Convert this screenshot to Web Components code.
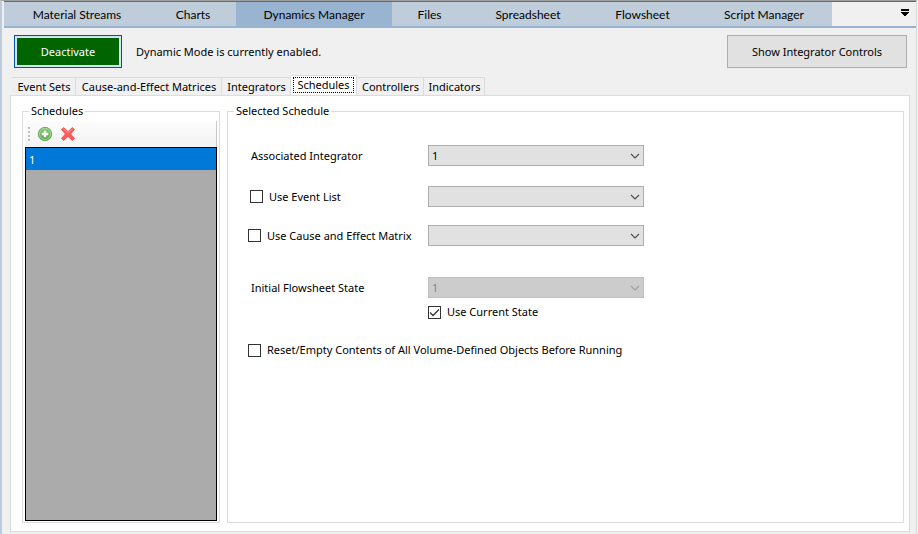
<!DOCTYPE html>
<html lang="en">
<head>
<meta charset="utf-8">
<title>Dynamics Manager</title>
<style>
html, body { margin: 0; height: 100%; }
body { background: #f0f0f0; color: #000; font: 11px/16px "Noto Sans", "Open Sans", sans-serif; }
</style>
</head>
<body>
<dynamics-window>
  <view-tabs slot="views"></view-tabs>
  <action-bar slot="actions"></action-bar>
  <section-tabs slot="sections"></section-tabs>
  <group-box class="list" heading="Schedules"><schedule-list></schedule-list></group-box>
  <group-box class="detail" heading="Selected Schedule"><schedule-form></schedule-form></group-box>
</dynamics-window>
<script>
function define(name, html, setup) {
  const template = document.createElement('template');
  template.innerHTML = html;
  customElements.define(name, class extends HTMLElement {
    constructor() {
      super();
      this.attachShadow({ mode: 'open' }).append(template.content.cloneNode(true));
    }
    connectedCallback() { if (setup) setup(this, this.shadowRoot); }
  });
}

define('dynamics-window', `
<style>
:host { display: flex; flex-direction: column; box-sizing: border-box; min-height: 100vh;
  border-top: 1px solid #a0a0a0; border-left: 2px solid #bdcbde; padding-left: 2px; margin-right: 1px; border-right: 1px solid #dcdcdc; }
main { flex: 1; display: flex; flex-direction: column; padding: 7px 6px 2px; }
.page { flex: 1; display: grid; grid-template-columns: 198px 1fr; gap: 7px; padding: 7px 5px 8px 11px;
  background: #fff; border: 1px solid #dcdcdc; }
</style>
<slot name="views"></slot>
<main>
  <slot name="actions"></slot>
  <slot name="sections"></slot>
  <div class="page"><slot></slot></div>
</main>`);

define('view-tabs', `
<style>
:host { display: flex; align-items: stretch; height: 24px; border-top: 1px solid #696969; border-bottom: 2px solid #99b4d1; font-family: Lato, "Noto Sans", sans-serif; font-size: 12px; }
nav { display: flex; }
button { border: 0; padding: 2px 0 0; background: #bfcddb; color: inherit; font: inherit; white-space: nowrap; }
button[aria-current] { background: #99b4d1; }
.w1 { width: 146px; } .w2 { width: 86px; } .w3 { width: 156px; } .w4 { width: 75px; }
.w5 { width: 122px; } .w6 { width: 107px; } .w7 { width: 136px; }
.more { margin-left: auto; width: 22px; padding: 0 0 4px; background: none; display: grid; place-items: center; }
svg { display: block; }
</style>
<nav aria-label="Views">
<button class="w1">Material Streams</button><button class="w2">Charts</button><button class="w3" aria-current="page">Dynamics Manager</button><button class="w4">Files</button><button class="w5">Spreadsheet</button><button class="w6">Flowsheet</button><button class="w7">Script Manager</button>
</nav>
<button class="more" aria-label="More views"><svg width="8" height="7" viewBox="0 0 8 7" shape-rendering="crispEdges"><path d="M0 0h8v2H0zM0 3h8v1H7v1H6v1H5v1H3V6H2V5H1V4H0z"/></svg></button>`);

define('action-bar', `
<style>
:host { display: flex; align-items: center; gap: 14px; padding: 0 3px 0 4px; margin-bottom: 7px; }
button { box-sizing: border-box; height: 33px; padding: 0; color: inherit; font: inherit; }
.toggle { width: 108px; border: 1px solid #00559b; box-shadow: inset 0 0 0 2px #cfe5f5; background: #006400; color: #fff; }
.show { width: 180px; margin-left: auto; border: 1px solid #adadad; background: #e1e1e1; }
</style>
<button class="toggle">Deactivate</button>
<span>Dynamic Mode is currently enabled.</span>
<button class="show">Show Integrator Controls</button>`);

define('section-tabs', `
<style>
:host { display: flex; align-items: flex-end; padding-left: 2px; margin-bottom: -1px; }
button { box-sizing: border-box; height: 19px; border: 1px solid #dcdcdc; border-left-width: 0;
  padding: 0 0 0 1px; background: #f0f0f0; color: inherit; font: inherit; line-height: 16px; white-space: nowrap; }
button:first-child { border-left-width: 1px; }
.w1 { width: 64px; } .w2 { width: 146px; } .w3 { width: 69px; } .w4 { width: 66px; } .w5 { width: 67px; } .w6 { width: 61px; }
button[aria-selected=true] { height: 21px; background: #fff; border-bottom-color: #fff; padding: 1px 2px; }
button[aria-selected=true] span { display: block; line-height: 14px; border: 1px dotted #000; margin-bottom: 1px; }
</style>
<button class="w1">Event Sets</button><button class="w2">Cause-and-Effect Matrices</button><button class="w3">Integrators</button><button class="w4" role="tab" aria-selected="true"><span>Schedules</span></button><button class="w5">Controllers</button><button class="w6">Indicators</button>`);

define('group-box', `
<style>
:host { display: flex; min-width: 0; }
fieldset { flex: 1; min-width: 0; box-sizing: border-box; display: flex; flex-direction: column; margin: 0; padding: 2px 2px 1px; border: 1px solid #dcdcdc; }
legend { margin-left: 4px; padding: 0 2px; }
</style>
<fieldset><legend></legend><slot></slot></fieldset>`,
(el, root) => { root.querySelector('legend').textContent = el.getAttribute('heading'); });

define('schedule-list', `
<style>
:host { flex: 1; display: flex; flex-direction: column; }
.bar { display: flex; align-items: center; gap: 7px; height: 26px; padding: 0 3px;
  background: linear-gradient(#fdfdfd, #f3f3f3); border-right: 1px solid #c8c8c8; }
.bar button { border: 0; padding: 0; background: none; display: flex; }
ul { flex: 1; margin: 0; padding: 0; list-style: none; background: #ababab; border: 1px solid #000; }
li { background: #0078d7; color: #fff; padding: 4px 4px 2px 3px; }
</style>
<div class="bar">
<svg width="2" height="15" fill="#bebebe" aria-hidden="true"><path d="M0 0h2v2H0zM0 4h2v2H0zM0 8h2v2H0zM0 12h2v2H0z"/></svg>
<button aria-label="Add schedule"><svg width="16" height="16" viewBox="0 0 16 16">
<defs><linearGradient id="g" x2="0" y2="1"><stop stop-color="#8acb78"/><stop offset="1" stop-color="#55a449"/></linearGradient></defs>
<circle cx="8" cy="8" r="6.7" fill="url(#g)" stroke="#579e4b" stroke-width=".8"/><circle cx="8" cy="8" r="5.5" fill="none" stroke="#b4dfa9" stroke-width=".8"/>
<path d="M6.8 4.7h2.4v2.1h2.1v2.4H9.2v2.1H6.8V9.2H4.7V6.8h2.1z" fill="#fff"/></svg></button>
<button aria-label="Delete schedule"><svg width="16" height="16" viewBox="0 0 16 16">
<path d="M3.6 1.6 8 5.7l4.4-4.1 2 2L10.6 8l3.8 4.4-2 2L8 10.4l-4.4 4-2-2L5.4 8 1.6 3.6z" fill="#fb5c5a" stroke="#ef5350" stroke-linejoin="round"/>
<path d="m3.4 2.9 4.6 4.2 4.6-4.2" fill="none" stroke="#ff8f88"/></svg></button>
</div>
<ul><li>1</li></ul>`);

define('drop-down', `
<style>
:host { display: grid; width: 216px; height: 21px; }
select, svg { grid-area: 1 / 1; }
select { appearance: none; box-sizing: border-box; width: 100%; height: 100%; margin: 0; padding: 0 24px 0 3px;
  border: 1px solid #adadad; border-radius: 0; background: #e1e1e1; color: #000; font: inherit; opacity: 1; }
select:disabled { background: #ccc; border-color: #bfbfbf; color: #838383; }
svg { justify-self: end; align-self: center; margin-right: 4px; pointer-events: none; fill: none; stroke: #505050; }
select:disabled + svg { stroke: #a0a0a0; }
</style>
<select><option></option></select>
<svg width="10" height="6" viewBox="0 0 10 6"><path stroke-width="1.2" d="m1 1 4 4 4-4"/></svg>`,
(el, root) => {
  const select = root.querySelector('select');
  select.setAttribute('aria-label', el.getAttribute('label'));
  select.options[0].textContent = el.getAttribute('value') || '';
  select.disabled = el.hasAttribute('disabled');
});

define('tick-box', `
<style>
:host { display: block; }
label { display: flex; align-items: center; gap: 6px; line-height: 16px; white-space: nowrap; }
.box { display: grid; width: 13px; height: 13px; }
input, svg { grid-area: 1 / 1; }
input { appearance: none; box-sizing: border-box; width: 13px; height: 13px; margin: 0; border: 1px solid #333; background: #fff; }
svg { fill: none; stroke: #333; visibility: hidden; pointer-events: none; }
input:checked + svg { visibility: visible; }
</style>
<label><span class="box"><input type="checkbox"><svg width="13" height="13"><path stroke-width="1.3" d="m2 6.5 3 3 6-6"/></svg></span><slot></slot></label>`,
(el, root) => { root.querySelector('input').checked = el.hasAttribute('checked'); });

define('schedule-form', `
<style>
:host { display: block; padding: 24px 18px 24px; }
.row { display: grid; grid-template-columns: 180px auto; justify-content: start; align-items: center; min-height: 21px; }
.name { padding-left: 3px; }
.event { padding-left: 2px; }
.near { margin-top: 18px; }
.mid { margin-top: 20px; }
.far { margin-top: 31px; }
.current { margin: 6px 0 0 180px; }
.reset { margin-top: 22px; }
</style>
<div class="row"><span class="name">Associated Integrator</span><drop-down label="Associated Integrator" value="1"></drop-down></div>
<div class="row mid"><tick-box class="event">Use Event List</tick-box><drop-down label="Event List"></drop-down></div>
<div class="row near"><tick-box>Use Cause and Effect Matrix</tick-box><drop-down label="Cause and Effect Matrix"></drop-down></div>
<div class="row far"><span class="name">Initial Flowsheet State</span><drop-down label="Initial Flowsheet State" value="1" disabled></drop-down></div>
<tick-box class="current" checked>Use Current State</tick-box>
<tick-box class="reset">Reset/Empty Contents of All Volume-Defined Objects Before Running</tick-box>`);
</script>
</body>
</html>
